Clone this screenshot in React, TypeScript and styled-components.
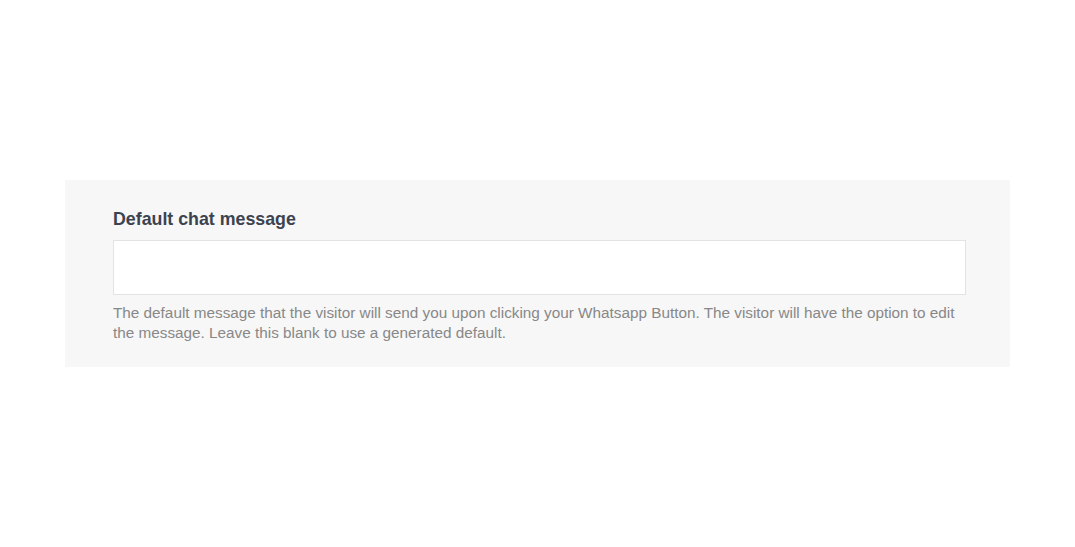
import React from "react";
import styled, { createGlobalStyle } from "styled-components";

const Global = createGlobalStyle`
  html, body { margin: 0; padding: 0; background: #ffffff; }
  body { font-family: "Liberation Sans", Arial, sans-serif; }
`;

const Page = styled.div`
  padding-top: 180px;
  padding-left: 65px;
`;

const Panel = styled.section`
  box-sizing: border-box;
  width: 945px;
  height: 187px;
  background: #f7f7f7;
  padding: 29px 44px 0 48px;
  display: flex;
  flex-direction: column;
`;

const Label = styled.label`
  font-size: 17.8px;
  line-height: 20px;
  font-weight: bold;
  color: #3c4350;
  margin-bottom: 11px;
`;

const Input = styled.input`
  box-sizing: border-box;
  width: 853px;
  height: 55px;
  border: 1px solid #e3e3e3;
  background: #ffffff;
  outline: none;
  padding: 0 12px;
  font-family: inherit;
  font-size: 14px;
`;

const Help = styled.p`
  margin: 8px 0 0;
  font-size: 15.3px;
  line-height: 20px;
  color: #888888;
  width: 853px;
`;

export default function App() {
  return (
    <>
      <Global />
      <Page>
        <Panel>
          <Label>Default chat message</Label>
          <Input type="text" />
          <Help>
            The default message that the visitor will send you upon clicking your Whatsapp Button. The visitor will have the option to edit the message. Leave this blank to use a generated default.
          </Help>
        </Panel>
      </Page>
    </>
  );
}
